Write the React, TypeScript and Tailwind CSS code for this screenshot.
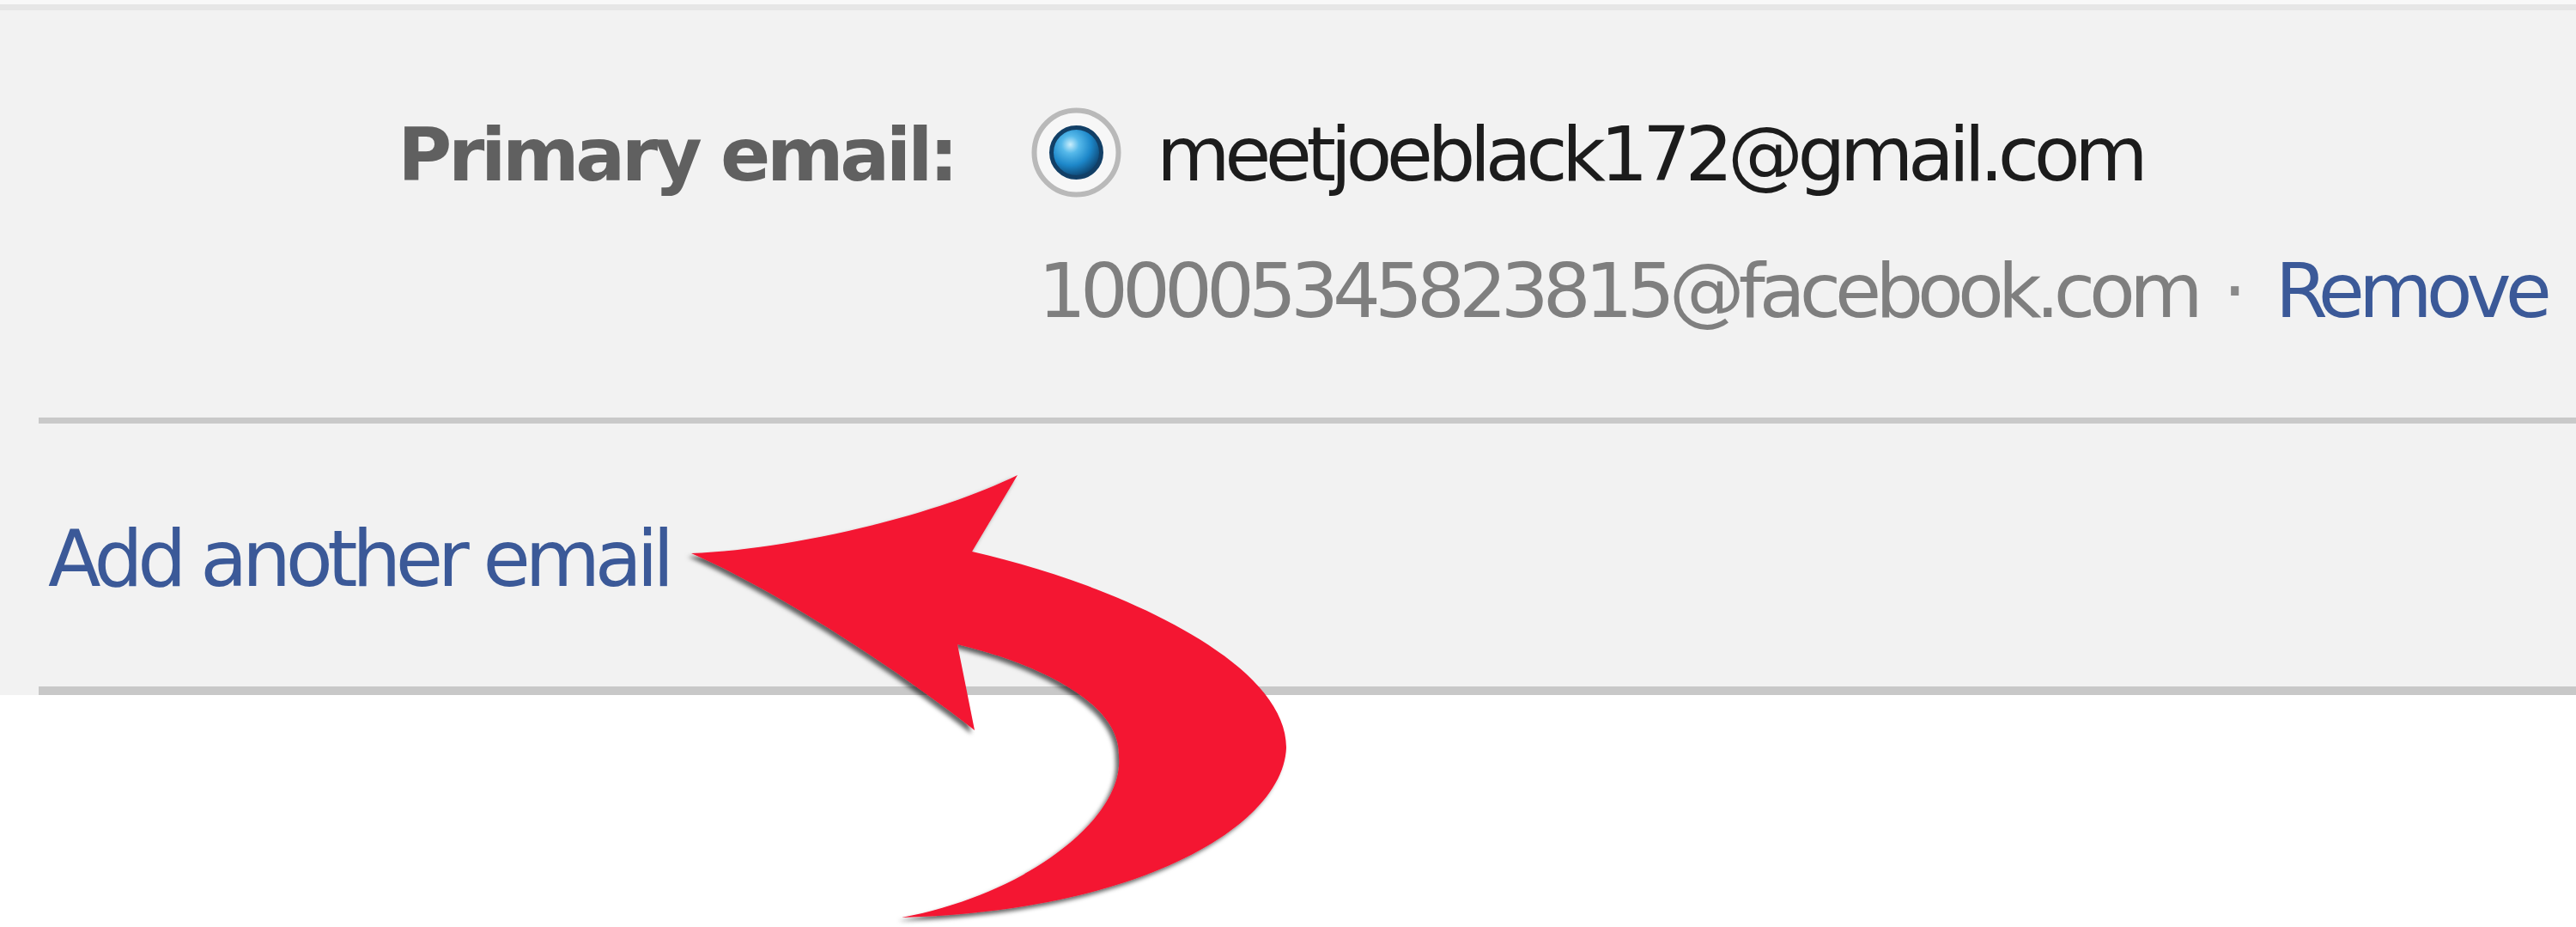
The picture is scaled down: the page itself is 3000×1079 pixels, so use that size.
import React from 'react';

// radio dot as drawn by old Windows themes
function RadioOn() {
  return (
    <svg width="107" height="107" viewBox="0 0 107 107">
      <defs>
        <radialGradient id="ball" cx="0.38" cy="0.34" r="0.7">
          <stop offset="0" stopColor="#c9eefc" />
          <stop offset="0.25" stopColor="#56b9ea" />
          <stop offset="0.6" stopColor="#1d87c9" />
          <stop offset="1" stopColor="#0b3a63" />
        </radialGradient>
      </defs>
      <circle cx="53.5" cy="53.5" r="49" fill="#f7f7f7" stroke="#b9b9b9" strokeWidth="6" />
      <circle cx="53.5" cy="53.5" r="29" fill="url(#ball)" stroke="#123f66" strokeWidth="5" />
    </svg>
  );
}

function Arrow() {
  return (
    <svg
      className="absolute left-[760px] top-[520px]"
      width="780"
      height="580"
      viewBox="760 520 780 580"
    >
      <defs>
        <filter id="shade" x="-10%" y="-10%" width="120%" height="120%">
          <feDropShadow dx="-4" dy="4" stdDeviation="2.5" floodColor="#000" floodOpacity="0.6" />
        </filter>
      </defs>
      <path
        filter="url(#shade)"
        fill="#f41431"
        d="M 805 644
           C 920 640, 1090 600, 1185 553
           L 1132 642
           C 1300 680, 1498 770, 1498 870
           C 1495 960, 1330 1060, 1050 1068
           C 1200 1040, 1310 950, 1303 880
           C 1305 815, 1200 770, 1115 750
           L 1135 850
           C 1040 775, 900 685, 805 644 Z"
      />
    </svg>
  );
}

export default function App() {
  return (
    <div className="relative h-[1079px] w-full overflow-hidden bg-white font-['DejaVu_Sans',sans-serif]">
      <div className="h-[5px] bg-[#f8f8f8]" />
      <div className="h-[7px] bg-[#e6e6e6]" />

      <div className="bg-[#f2f2f2] pl-[45px]">
        <div className="h-[474px] pt-[118px]">
          <div className="flex h-[100px] items-center">
            <div className="w-[1067px] text-right text-[86px] font-bold leading-[100px] tracking-[-4.4px] text-[#606060]">
              Primary email:
            </div>
            <div className="ml-[88px] mt-[-6px]">
              <RadioOn />
            </div>
            <div className="ml-[40px] text-[88px] leading-[100px] tracking-[-6.5px] text-[#1c1c1c]">
              meetjoeblack172@gmail.com
            </div>
          </div>
          <div className="ml-[1164px] mt-[59px] flex h-[100px] items-center text-[88px] leading-[100px] tracking-[-7px]">
            <span className="text-[#7f7f7f]">100005345823815@facebook.com</span>
            <span className="ml-[30px] text-[#8a8a8a]">·</span>
            <a className="ml-[40px] text-[#3b5998]">Remove</a>
          </div>
        </div>

        <div className="h-[7px] bg-[#c9c9c9]" />

        <div className="h-[306px] pt-[108px]">
          <a className="ml-[11px] block text-[90px] leading-[100px] tracking-[-6.4px] text-[#3b5998]">
            Add another email
          </a>
        </div>

        <div className="h-[10px] bg-[#c8c8c8]" />
      </div>

      <Arrow />
    </div>
  );
}
